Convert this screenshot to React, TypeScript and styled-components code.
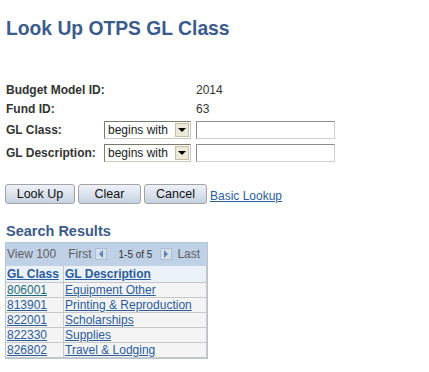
import styled, { createGlobalStyle } from 'styled-components'

const GlobalStyle = createGlobalStyle`
  body {
    margin: 0;
    background: #fff;
    font-family: Arial, "Liberation Sans", sans-serif;
  }
`

const Page = styled.div`
  padding: 17px 0 0 5px;
  width: 424px;
  height: 355px;
  box-sizing: content-box;
`

const Title = styled.h1`
  margin: 0 0 0 1px;
  font-size: 19.3px;
  line-height: 24px;
  font-weight: bold;
  color: #3b5b8a;
`

const Form = styled.div`
  display: grid;
  grid-template-columns: 94px 87px 139px;
  column-gap: 5px;
  margin-top: 39px;
  align-items: center;
`

const Label = styled.div<{ $h: number }>`
  height: ${({ $h }) => $h}px;
  display: flex;
  align-items: center;
  padding-left: 1px;
  font-size: 12px;
  font-weight: bold;
  color: #333;
  white-space: nowrap;
`

const Value = styled.div`
  grid-column: 3;
  font-size: 12px;
  color: #333;
`

const Spacer = styled.div``

const Select = styled.div`
  height: 18px;
  box-sizing: border-box;
  border: 1px solid #7a7a6a;
  border-right-color: #c8c8c0;
  border-bottom-color: #c8c8c0;
  background: #fff;
  display: flex;
  align-items: center;
  justify-content: space-between;
  padding: 0 1px 0 3px;
  font-size: 12px;
  color: #222;
`

const Arrow = styled.span`
  width: 14px;
  height: 14px;
  box-sizing: border-box;
  background: #ece9d8;
  border: 1px solid #c4c0aa;
  display: flex;
  align-items: center;
  justify-content: center;

  &::after {
    content: '';
    border-left: 4px solid transparent;
    border-right: 4px solid transparent;
    border-top: 4px solid #000;
  }
`

const TextInput = styled.div`
  height: 18px;
  box-sizing: border-box;
  border: 1px solid #8c8c8c;
  border-right-color: #cfcfcf;
  border-bottom-color: #cfcfcf;
  background: #fff;
`

const Buttons = styled.div`
  display: flex;
  align-items: center;
  gap: 3px;
  margin-top: 19px;
`

const Button = styled.button<{ $w: number }>`
  width: ${({ $w }) => $w}px;
  height: 20px;
  padding: 0;
  border: 1px solid #a3a3a3;
  border-radius: 3px;
  background: linear-gradient(#eef1f7 0%, #dde4ef 45%, #c6d1e0 100%);
  font-family: Arial, "Liberation Sans", sans-serif;
  font-size: 12.5px;
  color: #111;
`

const TextLink = styled.a`
  font-size: 12px;
  color: #2b5c9c;
  text-decoration: underline;
  margin-top: 3px;
`

const SubTitle = styled.h2`
  margin: 18px 0 0 1px;
  font-size: 14.5px;
  line-height: 18px;
  font-weight: bold;
  color: #3b5b8a;
`

const Grid = styled.div`
  width: 203px;
  margin-top: 2px;
  border: 1px solid #b8c4d2;
  box-sizing: border-box;
  overflow: hidden;
`

const NavBar = styled.div`
  height: 22px;
  display: flex;
  align-items: center;
  background: #bfd1e7;
  color: #5f5f5f;
  font-size: 12px;
  padding-left: 1px;
  white-space: nowrap;
`

const NavText = styled.span<{ $ml?: number }>`
  margin-left: ${({ $ml }) => $ml ?? 0}px;
`

const Count = styled.span`
  font-size: 10px;
  color: #333;
  margin: 0 8px 0 11px;
`

const NavButton = styled.span<{ $dir: 'left' | 'right'; $ml?: number }>`
  width: 12px;
  height: 12px;
  margin-left: ${({ $ml }) => $ml ?? 0}px;
  background: #d4dfec;
  border: 1px solid #aebfd4;
  box-sizing: border-box;
  display: flex;
  align-items: center;
  justify-content: center;

  &::after {
    content: '';
    border-top: 4px solid transparent;
    border-bottom: 4px solid transparent;
    ${({ $dir }) =>
      $dir === 'left' ? 'border-right: 4px solid #5f86b8;' : 'border-left: 4px solid #5f86b8;'}
  }
`

const Table = styled.table`
  border-collapse: collapse;
  width: 100%;
  font-size: 12px;
`

const Th = styled.th<{ $w?: number }>`
  width: ${({ $w }) => ($w ? `${$w}px` : 'auto')};
  height: 16px;
  padding: 0 1px;
  text-align: left;
  background: #eaf1f9;
  border-top: 1px solid #c6d2e0;
  border-right: 1px solid #c6c6c6;
  border-bottom: 1px solid #c6c6c6;
`

const Td = styled.td`
  height: 14px;
  padding: 0 1px;
  background: #f4f4f4;
  border-right: 1px solid #c8c8c8;
  border-bottom: 1px solid #c8c8c8;
  line-height: 14px;
`

const CellLink = styled.a<{ $bold?: boolean; $teal?: boolean }>`
  color: ${({ $teal }) => ($teal ? '#1d6c84' : '#2b5c9c')};
  font-weight: ${({ $bold }) => ($bold ? 'bold' : 'normal')};
  text-decoration: underline;
`

const rows = [
  ['806001', 'Equipment Other'],
  ['813901', 'Printing & Reproduction'],
  ['822001', 'Scholarships'],
  ['822330', 'Supplies'],
  ['826802', 'Travel & Lodging'],
]

export default function App() {
  return (
    <>
      <GlobalStyle />
      <Page>
        <Title>Look Up OTPS GL Class</Title>
        <Form>
          <Label $h={19}>Budget Model ID:</Label>
          <Spacer />
          <Value>2014</Value>
          <Label $h={20}>Fund ID:</Label>
          <Spacer />
          <Value>63</Value>
          <Label $h={22}>GL Class:</Label>
          <Select>
            begins with
            <Arrow />
          </Select>
          <TextInput />
          <Label $h={24}>GL Description:</Label>
          <Select>
            begins with
            <Arrow />
          </Select>
          <TextInput />
        </Form>
        <Buttons>
          <Button $w={70}>Look Up</Button>
          <Button $w={63}>Clear</Button>
          <Button $w={63}>Cancel</Button>
          <TextLink>Basic Lookup</TextLink>
        </Buttons>
        <SubTitle>Search Results</SubTitle>
        <Grid>
          <NavBar>
            <NavText>View 100</NavText>
            <NavText $ml={12}>First</NavText>
            <NavButton $dir="left" $ml={4} />
            <Count>1-5 of 5</Count>
            <NavButton $dir="right" />
            <NavText $ml={5}>Last</NavText>
          </NavBar>
          <Table>
            <thead>
              <tr>
                <Th $w={55}>
                  <CellLink $bold>GL Class</CellLink>
                </Th>
                <Th>
                  <CellLink $bold>GL Description</CellLink>
                </Th>
              </tr>
            </thead>
            <tbody>
              {rows.map(([code, desc], i) => (
                <tr key={code}>
                  <Td>
                    <CellLink $teal={i === 0}>{code}</CellLink>
                  </Td>
                  <Td>
                    <CellLink>{desc}</CellLink>
                  </Td>
                </tr>
              ))}
            </tbody>
          </Table>
        </Grid>
      </Page>
    </>
  )
}
